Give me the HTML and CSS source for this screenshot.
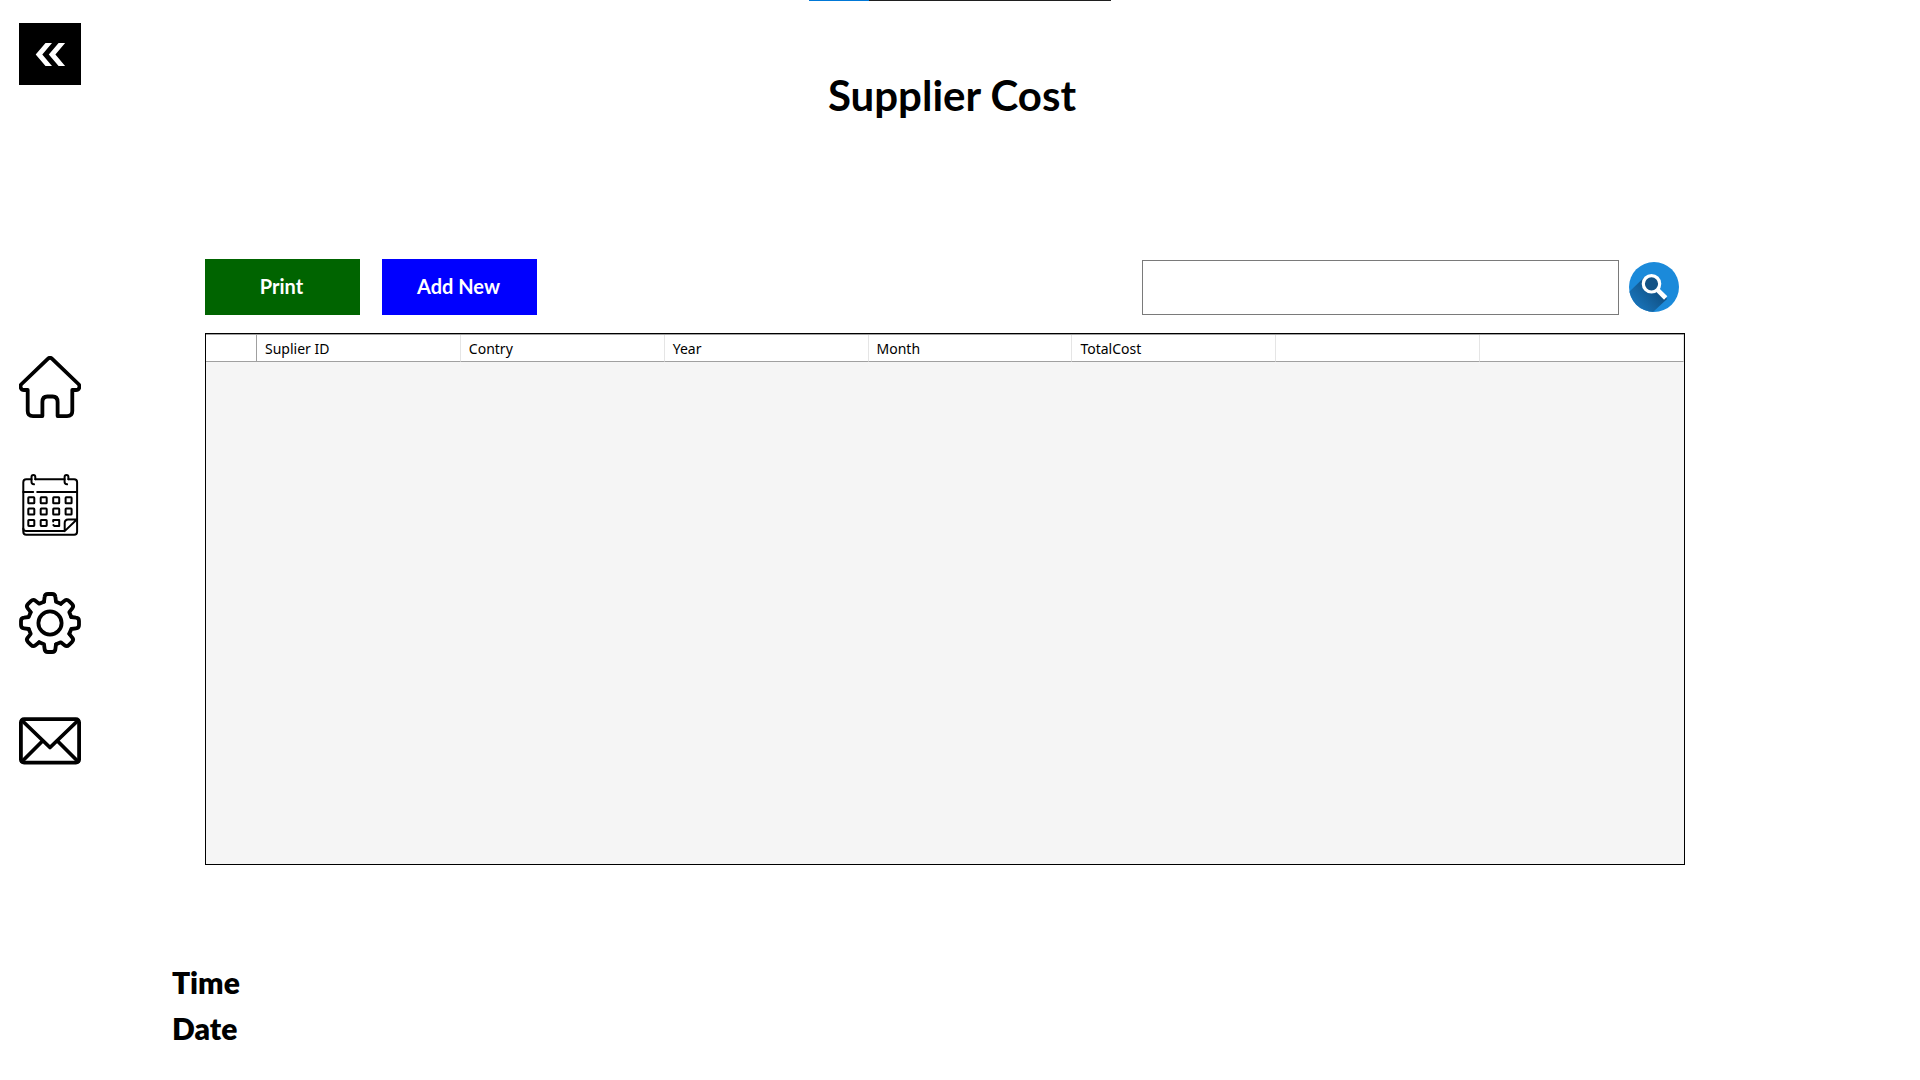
FILE: index.html
```html
<!DOCTYPE html>
<html lang="en">
<head>
<meta charset="utf-8">
<title>Supplier Cost</title>
<link rel="stylesheet" href="styles.css">
</head>
<body>
<div class="loading-strip"></div>
<div class="page">
  <aside class="sidebar">
    <button class="back" type="button" aria-label="Back">
      <svg class="icon" viewBox="0 0 62 62" fill="#fff">
        <path d="M16.7 31.5L26.5 20H33L23.3 31.5L33 43H26.5Z"/>
        <path d="M29.8 31.5L39.6 20H46.1L36.4 31.5L46.1 43H39.6Z"/>
      </svg>
    </button>
    <nav class="nav">
      <a href="#home" aria-label="Home">
        <svg class="icon line" viewBox="0 0 62 62" stroke-width="3.8">
          <path d="M8.7 34H5.2a3.5 3.5 0 0 1-2.6-6L28.8 2.8q2.2-2 4.4 0L59.4 28a3.5 3.5 0 0 1-2.6 6H53.3V55q0 5.1-5.3 5.1H38.6V46q0-5.5-5-5.5h-5.2q-5 0-5 5.5V60.1H14q-5.3 0-5.3-5.1Z"/>
        </svg>
      </a>
      <a href="#calendar" aria-label="Calendar">
        <svg class="icon line" viewBox="0 0 62 62" stroke-width="2">
          <defs>
            <rect id="day" width="6" height="6" rx="0.6"/>
            <path id="ring" d="M16.3 5.3V3a1.9 1.9 0 0 0-3.8 0V8q0 2 2.5 2.3"/>
          </defs>
          <path d="M12.5 5.3H7.3a3 3 0 0 0-3 3V57.7a3 3 0 0 0 3 3H55.1a3 3 0 0 0 3-3V8.3a3 3 0 0 0-3-3H49.4M16.3 5.3H45.6"/>
          <use href="#ring"/><use href="#ring" x="33.1"/>
          <path d="M4.3 18H14.2M18.2 18H58M4.3 54.5q0 2.6 3 2.6H45.7M57.8 45.5L45.7 57.1V49q0-3.5 3.5-3.5Z"/>
          <use href="#day" x="9.3" y="23.3"/><use href="#day" x="21.7" y="23.3"/><use href="#day" x="34.2" y="23.3"/><use href="#day" x="46.6" y="23.3"/>
          <use href="#day" x="9.3" y="34.6"/><use href="#day" x="21.7" y="34.6"/><use href="#day" x="34.2" y="34.6"/><use href="#day" x="46.6" y="34.6"/>
          <use href="#day" x="9.3" y="45.9"/><use href="#day" x="21.7" y="45.9"/>
          <path d="M34.2 47.6V45.9H40.2V51.9H35.2L34.4 51"/>
        </svg>
      </a>
      <a href="#settings" aria-label="Settings">
        <svg class="icon line" viewBox="-31 -31 62 62" stroke-width="3.8">
          <defs>
            <path id="tooth" d="M-6-21.3L-5.4-26Q-5.2-29-2-29H2Q5.2-29 5.4-26L6-21.3L10.8-19.3"/>
          </defs>
          <circle r="11.6"/>
          <use href="#tooth"/>
          <use href="#tooth" transform="rotate(45)"/>
          <use href="#tooth" transform="rotate(90)"/>
          <use href="#tooth" transform="rotate(135)"/>
          <use href="#tooth" transform="rotate(180)"/>
          <use href="#tooth" transform="rotate(225)"/>
          <use href="#tooth" transform="rotate(270)"/>
          <use href="#tooth" transform="rotate(315)"/>
        </svg>
      </a>
      <a href="#mail" aria-label="Mail">
        <svg class="icon line" viewBox="0 0 62 62" stroke-width="3.8">
          <rect x="1.9" y="9.2" width="58.2" height="43.4" rx="3.2"/>
          <path d="M3 10.5L31 37.5L59 10.5M3 51.5L23.5 31M59 51.5L38.5 31"/>
        </svg>
      </a>
    </nav>
  </aside>

  <main class="main">
    <h1 class="title">Supplier Cost</h1>
    <section class="records">
      <div class="toolbar">
        <button class="action print" type="button">Print</button>
        <button class="action add" type="button">Add New</button>
        <form class="search" role="search">
          <input class="search-box" type="text" aria-label="Search">
          <button class="search-button" type="button" aria-label="Search">
            <svg viewBox="0 0 50 50">
              <defs>
                <linearGradient id="shade" gradientUnits="userSpaceOnUse" x1="30" y1="26" x2="10" y2="44">
                  <stop offset="0" stop-color="#104e80"/>
                  <stop offset="1" stop-color="#1870b4"/>
                </linearGradient>
                <clipPath id="disc"><circle cx="25" cy="25" r="25"/></clipPath>
              </defs>
              <circle cx="25" cy="25" r="25" fill="#1b8ada"/>
              <path d="M15.5 15L0 30V50H24L38 37L24 20Z" fill="url(#shade)" clip-path="url(#disc)"/>
              <circle cx="22.5" cy="21.8" r="8.2" fill="#135285" stroke="#fff" stroke-width="3.2"/>
              <path d="M28.5 27.8L36.7 36" stroke="#fff" stroke-width="4.6"/>
            </svg>
          </button>
        </form>
      </div>
      <div class="grid">
        <table class="table">
          <colgroup><col class="row-mark"><col span="7"></colgroup>
          <thead>
            <tr>
              <td></td>
              <th scope="col">Suplier ID</th>
              <th scope="col">Contry</th>
              <th scope="col">Year</th>
              <th scope="col">Month</th>
              <th scope="col">TotalCost</th>
              <td></td>
              <td></td>
            </tr>
          </thead>
        </table>
      </div>
    </section>
    <footer class="clock">
      <p>Time</p>
      <p>Date</p>
    </footer>
  </main>
</div>
</body>
</html>
```
FILE: styles.css
```css
* {
  box-sizing: border-box;
}

body {
  margin: 0;
  background: #fff;
  color: #000;
  font-family: Lato, "Liberation Sans", sans-serif;
}

button {
  border: 0;
  padding: 0;
  font: inherit;
  cursor: pointer;
}

svg {
  display: block;
}

.loading-strip {
  width: 302px;
  height: 1px;
  margin: 0 auto;
  background: linear-gradient(to right, #0078d7 60px, #1f1f1f 60px);
}

.page {
  display: flex;
}

.sidebar {
  flex: none;
  width: 172px;
  padding: 22px 19px;
}

.icon {
  width: 62px;
  height: 62px;
}

.line {
  fill: none;
  stroke: #000;
  stroke-linecap: round;
  stroke-linejoin: round;
}

.back {
  display: block;
  background: #000;
}

.nav {
  display: flex;
  flex-direction: column;
  align-items: flex-start;
  gap: 56px;
  margin-top: 271px;
}

.main {
  flex: 1;
  margin-right: 188px;
}

.title {
  margin: 68px 0 0;
  font-size: 42px;
  line-height: 52px;
  font-weight: 700;
  text-align: center;
}

.records {
  padding: 138px 47px 0 33px;
}

.toolbar {
  display: flex;
  align-items: flex-end;
  height: 56px;
}

.action {
  width: 155px;
  height: 56px;
  padding: 0 2px 2px 0;
  color: #fff;
  font-size: 20px;
  line-height: 24px;
  font-weight: 700;
}

.print {
  background: #006400;
}

.add {
  margin-left: 22px;
  background: #00f;
}

.search {
  display: flex;
  align-items: center;
  gap: 10px;
  margin-left: auto;
  padding-right: 6px;
}

.search-box {
  width: 477px;
  height: 55px;
  border: 1px solid #7a7a7a;
  border-radius: 0;
  padding: 0 12px;
  font: inherit;
  font-size: 20px;
}

.search-button {
  padding-bottom: 2px;
  background: none;
}

.search-button svg {
  width: 50px;
  height: 50px;
}

.grid {
  min-height: 532px;
  margin-top: 18px;
  border: 1px solid #000;
  background: #f5f5f5;
}

.table {
  width: 100%;
  table-layout: fixed;
  border-collapse: separate;
  border-spacing: 0;
  border-top: 1px solid #a0a0a0;
  background: #fff;
  font-family: "Noto Sans", "Open Sans", sans-serif;
  font-size: 14px;
  line-height: 20px;
}

.row-mark {
  width: 51px;
}

.table th,
.table td {
  height: 27px;
  padding: 4px 8px 2px;
  border-right: 1px solid #e5e5e5;
  border-bottom: 1px solid #a0a0a0;
  font-weight: 400;
  text-align: left;
}

.table td:first-child {
  border-right-color: #a0a0a0;
}

.clock {
  margin-top: 94px;
  font-size: 30px;
  line-height: 46px;
  font-weight: 800;
}

.clock p {
  margin: 0;
}
```
